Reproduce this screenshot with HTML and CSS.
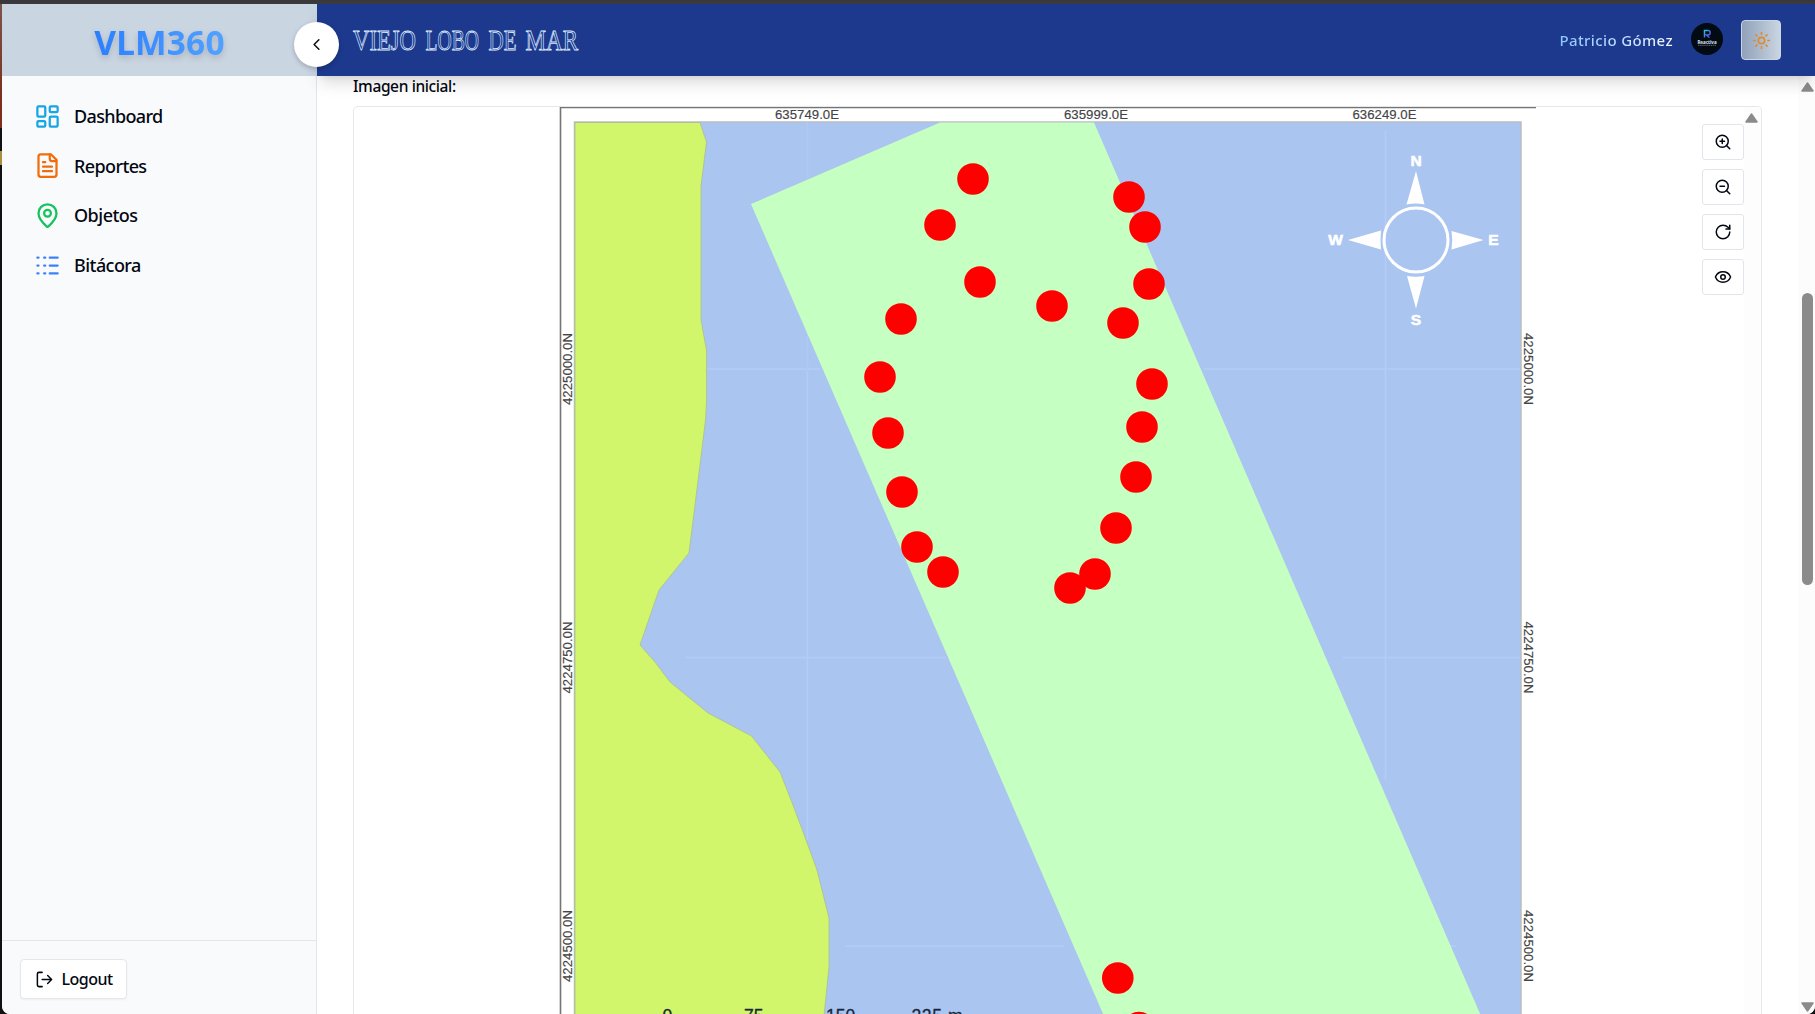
FILE: index.html
```html
<!DOCTYPE html>
<html lang="es">
<head>
<meta charset="utf-8">
<title>VLM360</title>
<link rel="stylesheet" href="styles.css">
</head>
<body>
<div class="desktop">
<div class="app">
  <aside class="sidebar">
    <div class="brand"><span class="brand-name">VLM360</span></div>
    <nav class="nav">
      <a class="nav-item"><svg class="icon sky" viewBox="0 0 24 24"><rect x="3" y="3" width="7" height="9" rx="1"/><rect x="14" y="3" width="7" height="5" rx="1"/><rect x="14" y="12" width="7" height="9" rx="1"/><rect x="3" y="16" width="7" height="5" rx="1"/></svg><span class="l-dashboard">Dashboard</span></a>
      <a class="nav-item"><svg class="icon orange" viewBox="0 0 24 24"><path d="M15 2H6a2 2 0 0 0-2 2v16a2 2 0 0 0 2 2h12a2 2 0 0 0 2-2V7Z"/><path d="M14 2v4a2 2 0 0 0 2 2h4"/><path d="M10 9H8M16 13H8M16 17H8"/></svg><span class="l-reportes">Reportes</span></a>
      <a class="nav-item"><svg class="icon green" viewBox="0 0 24 24"><path d="M20 10c0 4.993-5.539 10.193-7.399 11.799a1 1 0 0 1-1.202 0C9.539 20.193 4 14.993 4 10a8 8 0 0 1 16 0"/><circle cx="12" cy="10" r="3"/></svg><span class="l-objetos">Objetos</span></a>
      <a class="nav-item"><svg class="icon blue" viewBox="0 0 24 24"><path d="M3 5h1M3 12h1M3 19h1M9 5h1M9 12h1M9 19h1M14 5h7M14 12h7M14 19h7"/></svg><span class="l-bitacora">Bitácora</span></a>
    </nav>
    <div class="sidebar-foot">
      <button class="logout"><svg class="icon-sm" viewBox="0 0 24 24"><path d="M9 21H5a2 2 0 0 1-2-2V5a2 2 0 0 1 2-2h4M16 17l5-5-5-5M21 12H9"/></svg><span>Logout</span></button>
    </div>
  </aside>

  <main class="main">
    <header class="topbar">
      <svg class="title" viewBox="0 0 250 48"><text y="34"><tspan x="1" textLength="63" lengthAdjust="spacingAndGlyphs">VIEJO</tspan><tspan x="73.500" textLength="53.500" lengthAdjust="spacingAndGlyphs">LOBO</tspan><tspan x="136.500" textLength="28" lengthAdjust="spacingAndGlyphs">DE</tspan><tspan x="173.500" textLength="52.500" lengthAdjust="spacingAndGlyphs">MAR</tspan></text></svg>
      <div class="user">
        <span class="user-name">Patricio Gómez</span>
        <svg class="avatar" viewBox="0 0 32 32">
          <defs><linearGradient id="logo" x1="0" x2="1" y1="0" y2="1"><stop offset="0" stop-color="#22c5e8"/><stop offset="1" stop-color="#5b32d6"/></linearGradient></defs>
          <circle cx="16" cy="16" r="16" fill="#020a14"/>
          <path d="M13.500 14.500V7.500H17a2.200 2.200 0 0 1 0 4.400h-1.500l3 2.800" fill="none" stroke="url(#logo)" stroke-width="1.500"/>
          <text x="16" y="20.500" text-anchor="middle" class="avatar-name">Reactiva</text>
          <path d="M7 22.300h18" stroke="#777d88" stroke-width=".8" stroke-dasharray="1.500 .6"/>
        </svg>
        <button class="theme"><svg class="sun" viewBox="0 0 24 24"><circle cx="12" cy="12" r="4"/><path d="M12 2v2M12 20v2M4.930 4.930l1.410 1.410M17.660 17.660l1.410 1.410M2 12h2M20 12h2M6.340 17.660l-1.410 1.410M19.070 4.930l-1.410 1.410"/></svg></button>
      </div>
    </header>
    <button class="collapse"><svg class="chevron" viewBox="0 0 24 24"><path d="m15 18-6-6 6-6"/></svg></button>

    <div class="body">
      <section class="content">
        <h2 class="label">Imagen inicial:</h2>
        <div class="viewer">
          <svg class="map" viewBox="354 107 1390 907">
            <path d="M560.500 1014V107.500H1536" fill="none" stroke="#747474" stroke-width="1.600"/>
            <rect x="574.500" y="122" width="946.500" height="900" fill="#abc5f1" stroke="#b9bdc2" stroke-width="1.500"/>
            <g stroke="#b3cdf8" stroke-width="1.600"><path d="M807.500 372V840M1385.500 131V780M706 369H820M1204 369H1520M685 657.500H946M1343 657.500H1520M845 946H1064M1446 946H1456"/></g>
            <path d="M807.500 122V372" stroke="#afc9f4" stroke-width="1.500"/>
            <path class="land" d="M575 122.500H700L706.500 142 701 186V320L706.500 350V403L705.500 420 699 473 689 553 659 590 640 645 655 662 670 682 708 713 751.500 736 780 772 793 805 809 848 817 870 829 918V967L824 1016H575Z"/>
            <path d="M751 204 940 122.500H1094L1481 1016H1104Z" fill="#c5ffc1"/>
            <g class="coord">
              <text x="775" y="119" textLength="64">635749.0E</text>
              <text x="1064" y="119" textLength="64">635999.0E</text>
              <text x="1352.500" y="119" textLength="64">636249.0E</text>
              <text transform="translate(572 405) rotate(-90)" textLength="72">4225000.0N</text>
              <text transform="translate(572 693.500) rotate(-90)" textLength="72">4224750.0N</text>
              <text transform="translate(572 982) rotate(-90)" textLength="72">4224500.0N</text>
              <text transform="translate(1523.500 333) rotate(90)" textLength="72">4225000.0N</text>
              <text transform="translate(1523.500 621.500) rotate(90)" textLength="72">4224750.0N</text>
              <text transform="translate(1523.500 910) rotate(90)" textLength="72">4224500.0N</text>
            </g>
            <g class="scale">
              <text x="662.500" y="1022">0</text><text x="744" y="1022">75</text><text x="826" y="1022">150</text><text x="911.500" y="1022" textLength="51">225 m</text>
            </g>
            <g fill="#fff">
              <circle cx="1416" cy="240" r="32" fill="none" stroke="#fff" stroke-width="3"/>
              <path d="M1416 171 1424.500 204.500Q1416 202.500 1406.500 204.500Z"/>
              <path d="M1416 308.500 1424.500 276Q1416 277.500 1407 276Z"/>
              <path d="M1348 240 1381 230.500Q1380 240 1381 249.500Z"/>
              <path d="M1483.500 240 1451.500 231Q1453 240 1451.500 249.500Z"/>
              <g class="compass"><text x="1416" y="166">N</text><text x="1416" y="325">S</text><text x="1335.500" y="245">W</text><text x="1493.500" y="245">E</text></g>
            </g>
            <g fill="#f00">
              <circle cx="973" cy="179" r="15.800"/><circle cx="940" cy="225" r="15.800"/><circle cx="980" cy="282" r="15.800"/><circle cx="901" cy="319" r="15.800"/><circle cx="880" cy="377" r="15.800"/><circle cx="888" cy="433" r="15.800"/><circle cx="902" cy="492" r="15.800"/><circle cx="917" cy="547" r="15.800"/><circle cx="943" cy="572" r="15.800"/><circle cx="1052" cy="306" r="15.800"/><circle cx="1129" cy="197" r="15.800"/><circle cx="1145" cy="227" r="15.800"/><circle cx="1149" cy="284" r="15.800"/><circle cx="1123" cy="323" r="15.800"/><circle cx="1152" cy="384" r="15.800"/><circle cx="1142" cy="427" r="15.800"/><circle cx="1136" cy="477" r="15.800"/><circle cx="1116" cy="528" r="15.800"/><circle cx="1095" cy="574" r="15.800"/><circle cx="1070" cy="588" r="15.800"/><circle cx="1117.800" cy="978" r="15.800"/><circle cx="1139" cy="1027.500" r="15.800"/>
            </g>
          </svg>
          <div class="viewer-scroll"><svg class="arrow" viewBox="0 0 13 10"><path d="M6.500 1 12 9H1Z"/></svg></div>
          <div class="tools">
            <button class="tool"><svg class="tool-icon" viewBox="0 0 24 24"><circle cx="11" cy="11" r="8"/><path d="m21 21-4.350-4.350M11 8v6M8 11h6"/></svg></button>
            <button class="tool"><svg class="tool-icon" viewBox="0 0 24 24"><circle cx="11" cy="11" r="8"/><path d="m21 21-4.350-4.350M8 11h6"/></svg></button>
            <button class="tool"><svg class="tool-icon" viewBox="0 0 24 24"><path d="M21 12a9 9 0 1 1-9-9c2.520 0 4.930 1 6.740 2.740L21 8"/><path d="M21 3v5h-5"/></svg></button>
            <button class="tool"><svg class="tool-icon" viewBox="0 0 24 24"><path d="M2.062 12.348a1 1 0 0 1 0-.696 10.750 10.750 0 0 1 19.876 0 1 1 0 0 1 0 .696 10.750 10.750 0 0 1-19.876 0"/><circle cx="12" cy="12" r="3"/></svg></button>
          </div>
        </div>
      </section>
      <div class="scrollbar">
        <svg class="arrow" viewBox="0 0 13 10"><path d="M6.500 1 12 9H1Z"/></svg>
        <div class="track"><div class="thumb"></div></div>
        <svg class="arrow" viewBox="0 0 13 10"><path d="M6.500 9 12 1H1Z"/></svg>
      </div>
    </div>
  </main>
</div>
</div>
</body>
</html>
```
FILE: styles.css
```css
* { box-sizing: border-box; }
body { margin: 0; overflow: hidden; font-family: "Noto Sans", "Open Sans", sans-serif; color: #030712; }
button { font: inherit; color: inherit; margin: 0; padding: 0; }
svg { display: block; }

.desktop {
  width: 1815px; height: 1014px; padding: 4px 0 0 2px;
  background:
    linear-gradient(#38383a, #3c3c3e) top / 100% 4px no-repeat,
    linear-gradient(#7b5651, #7d2f1c 100px, #7d2f1c 128px, #111 128px, #111 151px, #a98f3d 151px, #a98f3d 165px, #111 165px);
}
.app { display: flex; height: 1010px; background: #fff; border-radius: 0 0 8px 8px; overflow: hidden; }

.sidebar { width: 315px; display: flex; flex-direction: column; background: #f9fafc; border-right: 1px solid #e2e5e9; }
.brand { height: 72px; margin-right: -1px; background: #cad5e2; display: flex; align-items: center; justify-content: center; }
.brand-name {
  font-size: 33.500px; font-weight: 700; line-height: 46px; margin: 3px 0 0 0; letter-spacing: .15px;
  background: linear-gradient(90deg, #2b7fff, #51a2ff); -webkit-background-clip: text; background-clip: text; color: transparent;
  filter: drop-shadow(0 3px 3px rgba(0, 0, 0, .16));
}
.nav { flex: 1; padding: 15.500px 0 0 32px; }
.nav-item { display: flex; align-items: center; gap: 13px; height: 49.600px; font-size: 18px; font-weight: 500; }
.icon { width: 27px; height: 27px; fill: none; stroke: currentColor; stroke-width: 2; stroke-linecap: round; stroke-linejoin: round; }
.sky { color: #16a5e5; }
.orange { color: #f36c0b; }
.green { color: #14c35b; }
.blue { color: #3b82f6; }
.l-dashboard { letter-spacing: -.65px; }
.l-reportes { letter-spacing: -.62px; }
.l-objetos { letter-spacing: -.5px; }
.l-bitacora { letter-spacing: -.55px; }
.sidebar-foot { height: 74px; border-top: 1px solid #e2e5e9; padding: 18px; }
.logout {
  display: flex; align-items: center; gap: 8px; width: 107px; height: 40px; padding-left: 13.500px;
  background: #fff; border: 1px solid #e5e7eb; border-radius: 4px; box-shadow: 0 1px 2px rgba(0, 0, 0, .05);
  font-size: 16px; font-weight: 500; letter-spacing: -.5px;
}
.icon-sm { width: 19px; height: 19px; fill: none; stroke: currentColor; stroke-width: 1.900; stroke-linecap: round; stroke-linejoin: round; }

.main { flex: 1; position: relative; display: flex; flex-direction: column; min-width: 0; }
.topbar {
  height: 72px; flex: none; display: flex; align-items: center; justify-content: space-between;
  padding: 0 34px 0 35px; background: #1c398e; z-index: 1; box-shadow: 0 10px 15px -3px rgba(0, 0, 0, .14), 0 4px 6px -4px rgba(0, 0, 0, .1);
}
.title { width: 250px; height: 48px; }
.title text { font: 29.500px "Liberation Serif", "Times New Roman", serif; fill: none; stroke: #dbeafe; stroke-width: .8; }
.user { display: flex; align-items: center; }
.user-name {
  font-size: 15px; font-weight: 500; letter-spacing: .38px; margin-right: 18px;
  background: linear-gradient(90deg, #8ec5ff, #eff6ff); -webkit-background-clip: text; background-clip: text; color: transparent;
}
.avatar { width: 32px; height: 32px; margin: -3px 18px 0 0; }
.avatar-name { font: 700 4.500px "Noto Sans", sans-serif; fill: #dfe5ec; }
.theme { width: 40px; height: 40px; display: grid; place-items: center; border: 1px solid #cad5e2; border-radius: 4px; background: linear-gradient(90deg, #90a1b9, #cad5e2); }
.sun { width: 19px; height: 19px; fill: none; stroke: #e08a2e; stroke-width: 2; stroke-linecap: round; }
.collapse {
  position: absolute; left: -23px; top: 18px; z-index: 2; width: 45px; height: 45px; border: 0; border-radius: 50%;
  background: #fff; box-shadow: 0 2px 5px rgba(0, 0, 0, .22); display: grid; place-items: center;
}
.chevron { width: 19px; height: 19px; fill: none; stroke: #111; stroke-width: 2; stroke-linecap: round; stroke-linejoin: round; }

.body { flex: 1; display: flex; min-height: 0; }
.content { flex: 1; display: flex; flex-direction: column; padding: 0 36px 0 36px; }
.label { margin: 0; height: 30px; line-height: 20px; font-size: 15.500px; font-weight: 500; letter-spacing: -.38px; }
.viewer { flex: 1; display: flex; position: relative; border: 1px solid #e5e7eb; border-bottom: 0; border-radius: 5px 5px 0 0; overflow: hidden; }
.map { width: 1390px; height: 907px; flex: none; }
.land { fill: #d1f66b; stroke: #a9bd95; stroke-width: .8; }
.coord { font: 13.200px "Liberation Sans", Arial, sans-serif; fill: #444; stroke: #444; stroke-width: .15; }
.scale { font: 17.500px "Liberation Sans", Arial, sans-serif; fill: #17263a; stroke: #17263a; stroke-width: .3; }
.compass { font: 700 15.500px "Liberation Sans", Arial, sans-serif; text-anchor: middle; stroke: #fff; stroke-width: .6; }
.viewer-scroll { flex: 1; padding: 6px 0 0 1px; background: #fdfdfd; }
.arrow { width: 13px; height: 10px; fill: #8b8b8b; stroke: #8b8b8b; stroke-width: 1.500; stroke-linejoin: round; }
.tools { position: absolute; right: 17px; top: 17px; display: flex; flex-direction: column; gap: 9px; }
.tool { width: 42px; height: 36px; display: grid; place-items: center; background: #fff; border: 1px solid #e2e5e9; border-radius: 3px; }
.tool-icon { width: 18px; height: 18px; fill: none; stroke: #030712; stroke-width: 2; stroke-linecap: round; stroke-linejoin: round; }

.scrollbar { width: 17px; display: flex; flex-direction: column; align-items: center; padding: 6px 0 2px 1px; background: #fcfcfc; }
.track { flex: 1; padding-top: 201px; }
.thumb { width: 11px; height: 292px; border-radius: 6px; background: #8b8b8b; }
```
